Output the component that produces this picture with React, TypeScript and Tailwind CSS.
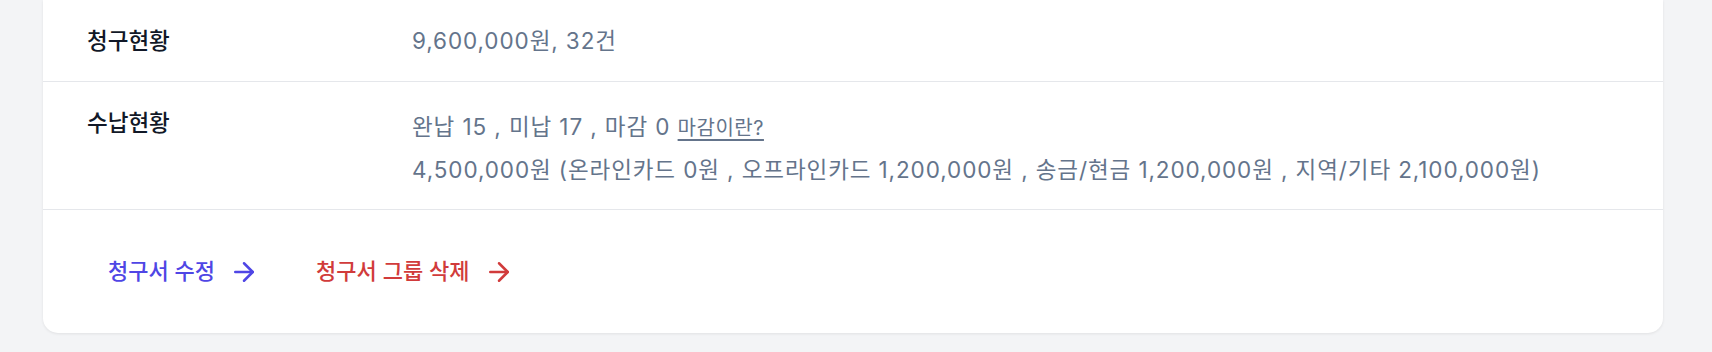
import React from "react";

const font = { fontFamily: '"Inter", "Noto Sans CJK KR", sans-serif' };

function Arrow({ className }: { className: string }) {
  return (
    <svg
      className={className}
      viewBox="0 0 24 24"
      fill="none"
      stroke="currentColor"
      strokeWidth={2}
      strokeLinecap="round"
      strokeLinejoin="round"
    >
      <path d="M5 12h14" />
      <path d="m12 5 7 7-7 7" />
    </svg>
  );
}

export default function App() {
  return (
    <div
      className="w-[1712px] h-[352px] bg-[#f3f4f6] overflow-hidden"
      style={font}
    >
      <div className="ml-[43px] w-[1620px] bg-white rounded-b-[15px] shadow-[0_1px_3px_rgba(0,0,0,0.08)]">
        <div className="flex h-[82px] items-center border-b border-[#e5e7eb]">
          <div className="w-[369px] pl-[44px] text-[22.5px] font-medium text-[#111827]">
            청구현황
          </div>
          <div className="text-[22.5px] tracking-[0.9px] text-[#64748b]">
            9,600,000원, 32건
          </div>
        </div>
        <div className="flex h-[128px] border-b border-[#e5e7eb] pt-[24px]">
          <div className="w-[369px] pl-[44px] text-[22.5px] leading-[34px] font-medium text-[#111827]">
            수납현황
          </div>
          <div className="flex flex-col gap-[8px] pt-[4px] text-[22.5px] tracking-[0.9px] leading-[34px] text-[#64748b]">
            <div>
              완납 15 , 미납 17 , 마감 0{" "}
              <span className="text-[20px] tracking-[0.5px] underline underline-offset-[4px]">
                마감이란?
              </span>
            </div>
            <div>
              4,500,000원 (온라인카드 0원 , 오프라인카드 1,200,000원 , 송금/현금
              1,200,000원 , 지역/기타 2,100,000원)
            </div>
          </div>
        </div>
        <div className="flex h-[123px] items-center pl-[65px] gap-[57px]">
          <button className="flex items-center gap-[14px] text-[22px] font-medium text-[#4f46e5]">
            청구서 수정
            <Arrow className="w-[30px] h-[30px]" />
          </button>
          <button className="flex items-center gap-[14px] text-[22px] font-medium text-[#d13b3b]">
            청구서 그룹 삭제
            <Arrow className="w-[30px] h-[30px]" />
          </button>
        </div>
      </div>
    </div>
  );
}
